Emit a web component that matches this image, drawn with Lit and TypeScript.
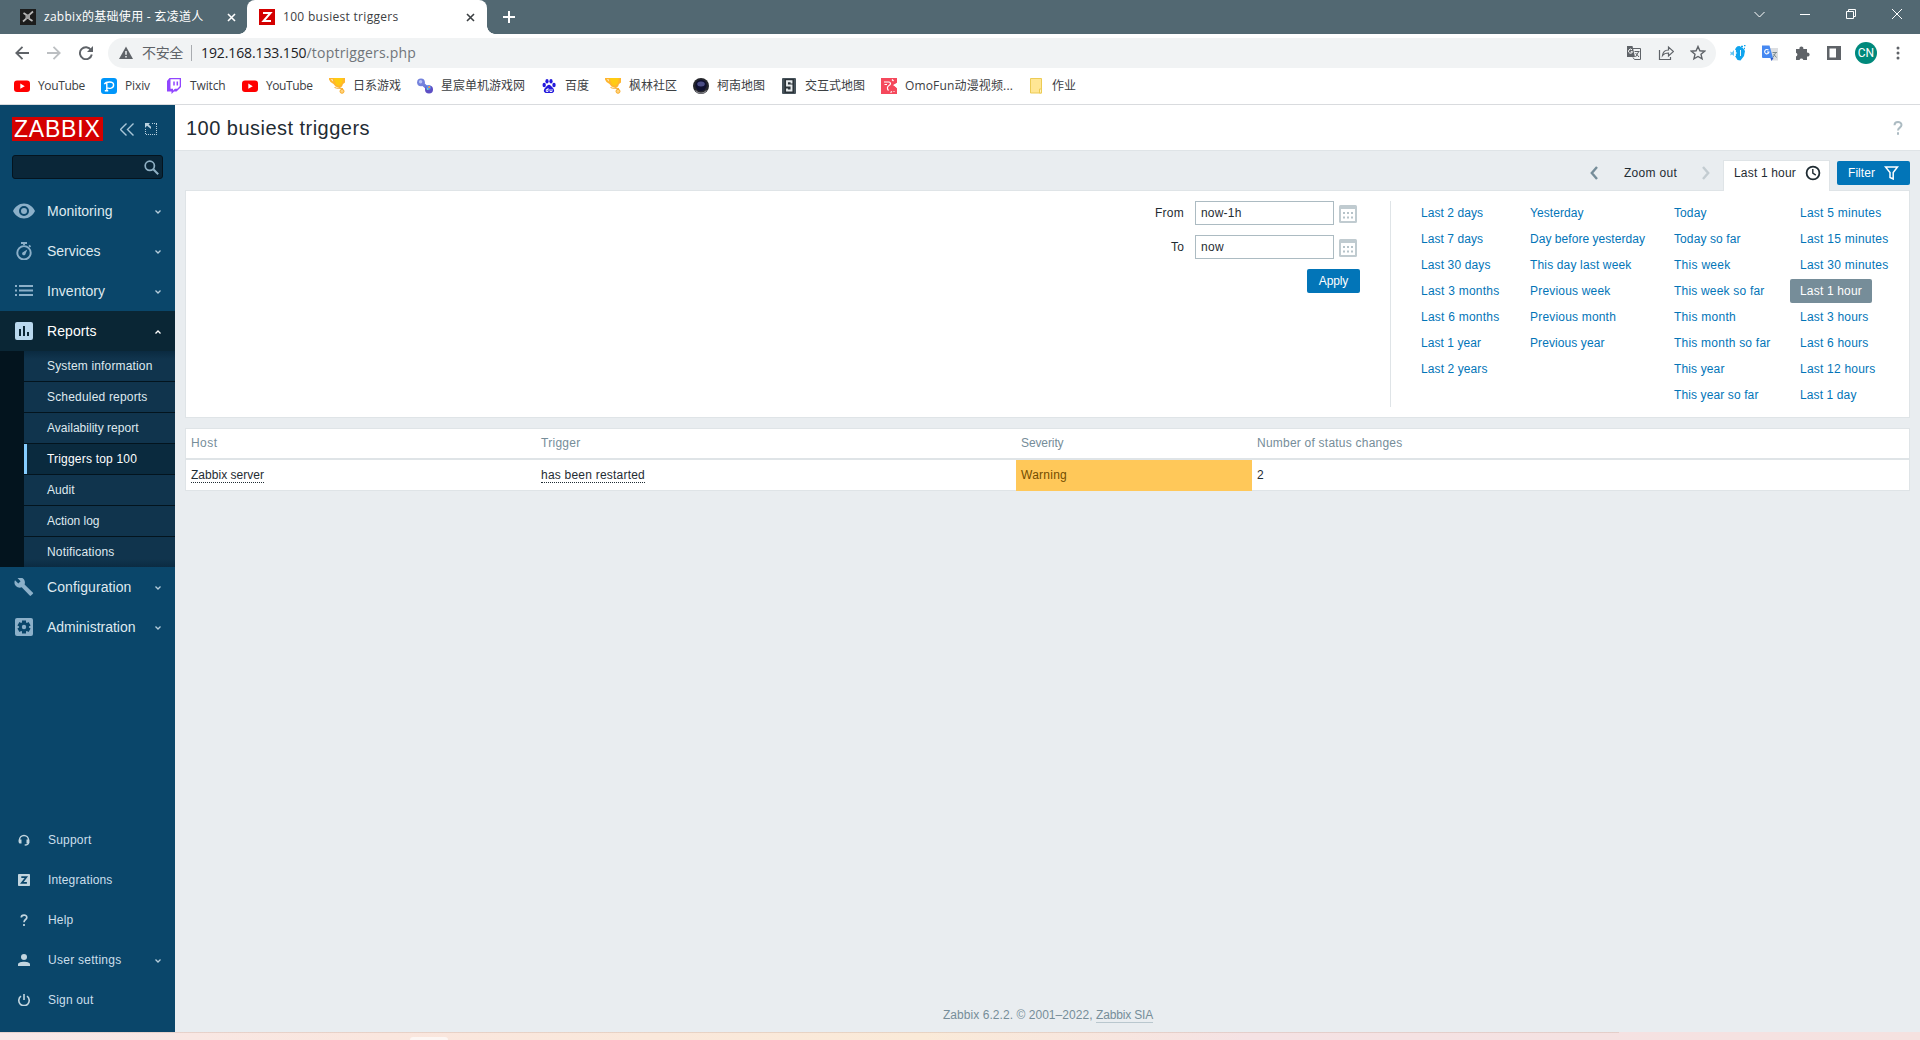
import { LitElement, html, svg, css } from "lit";
import { customElement } from "lit/decorators.js";
import { classMap } from "lit/directives/class-map.js";

const UI = '"Liberation Sans", Arial, sans-serif';
const CHROME = '"Open Sans", "Noto Sans CJK SC", sans-serif';

const pen = document.createElement("canvas").getContext("2d")!;

/** A run of text whose tracking is computed so that it occupies `width` pixels. */
const run = (text: string, width: number, size = 12, family = UI) => {
  pen.font = `${size}px ${family}`;
  const natural = pen.measureText(text).width;
  const gap = (width - natural) / text.length;
  return html`<span style="letter-spacing:${gap.toFixed(3)}px">${text}</span>`;
};

const icon = (w: number, h: number, body: unknown, cls = "") =>
  html`<svg class=${cls} width=${w} height=${h} viewBox="0 0 ${w} ${h}" fill="none">${body}</svg>`;

const cross = (s: number, sw: number) =>
  icon(s, s, svg`<path d="M1 1 L${s - 1} ${s - 1} M${s - 1} 1 L1 ${s - 1}" stroke="currentColor" stroke-width=${sw}/>`);

/* ---------- bookmark icons ---------- */
const youtube = svg`<rect x="0" y="2.5" width="16" height="11.5" rx="3" fill="#f00"/><path d="M6.3 5.6v5.2L10.8 8.2z" fill="#fff"/>`;
const pixiv = svg`<rect width="16" height="16" rx="3" fill="#0096fa"/><path d="M5.8 13V4.500M3.300 6.200C5 3.500 12.600 2.900 12.600 6.900c0 3.700-4.300 3.800-6.600 3M3.800 12.800h3.400" stroke="#fff" stroke-width="1.400"/>`;
const twitch = svg`<path d="M3.5 0H15v9l-4.5 4.5H8L5.5 16v-2.500H1V3z" fill="#9146ff"/><path d="M4.5 1.3H13.700V8.3L11.300 10.700H9L7 12.500V10.700H4.500z" fill="#fff"/><path d="M8 3.600v3.800M11.300 3.600v3.800" stroke="#9146ff" stroke-width="1.500"/>`;
const trophy = svg`<path d="M0 0h16v4.500l-2 1.500-1 2.500-2.500 1.500-4-1.500L4.500 6 1.500 4 0 1.500z" fill="#ffb52e"/><path d="M4.500 0h9.500l-1 5-3 3-3-1.500z" fill="#ffcb12"/><path d="M1.800 1.300h1.800l.6 2.400z" fill="#fff3d0"/><path d="M5.500 9.500c3 1.500 6 .2 8.500 1.200M11 9.500l2.500 2.500" stroke="#f8ac2a" stroke-width="1"/><circle cx="13" cy="13.300" r="2" fill="#ffd27a" stroke="#f8ac2a" stroke-width="1"/>`;
const gamepad = svg`<path d="M4 4.500L12 11.500" stroke="#6f7fd8" stroke-width="3.500"/><circle cx="4" cy="4.300" r="3.900" fill="#7482dc"/><circle cx="12" cy="11.500" r="4" fill="#5d4fc4"/><circle cx="11.500" cy="9.500" r="2.400" fill="#5b8def"/><circle cx="3.600" cy="3.800" r="1.700" fill="#b9c4f5"/><circle cx="12.200" cy="9" r="1" fill="#ff9d3b"/><circle cx="10.600" cy="11" r=".9" fill="#65e0c5"/>`;
const baidu = svg`<g fill="#2319dc"><ellipse cx="3.200" cy="7" rx="1.700" ry="2.200"/><ellipse cx="6" cy="3.200" rx="1.600" ry="2.200"/><ellipse cx="10" cy="3.200" rx="1.600" ry="2.200"/><ellipse cx="13" cy="7" rx="1.700" ry="2.200"/><path d="M8 6.800c1.500 0 2.200 1.500 3.500 2.700 3 3 1.500 5.500-1 5.500H5.500C3 15 1.500 12.500 4.500 9.500 5.800 8.300 6.500 6.800 8 6.800z"/></g><path d="M7 10v3.500H5.300v-2H7M9 11v2.500h2V11" stroke="#fff" stroke-width=".9"/>`;
const lens = svg`<circle cx="8" cy="8" r="8" fill="#25262c"/><circle cx="8" cy="7.300" r="5.600" fill="#0f1030"/><ellipse cx="8" cy="6" rx="3.800" ry="2.500" fill="#4b4d86"/><path d="M2.500 12.500a7 7 0 0 0 11 0" stroke="#8c8c92" stroke-width="1.200"/>`;
const slab = svg`<rect x="1" width="14" height="16" rx="1" fill="#46525a"/><rect x="3.500" y="1" width="9.500" height="14" fill="#2a3238"/><path d="M10.500 5.500V3.200H6v4.300h4.500v5H6v-2" stroke="#e8ecee" stroke-width="1.900"/>`;
const omo = svg`<path d="M0 0h16v6l-4 1 4 2.500V16H0z" fill="#f5485c"/><path d="M3 4h5c2 .5 2 2.500 0 3.500S6 11 7.500 12.500M3.500 6.500h2.500" stroke="#fff" stroke-width="1.200"/><path d="M11 1.500l1.500 1.500M13.500 7l2.500-1.500v4zM9.500 14.500l1.500-1M12.500 13.500h1" stroke="#fff" fill="#fff" stroke-width="1.200"/>`;
const folder = svg`<path d="M2.500.5h11v14.500h-11z" fill="#ffe694" stroke="#eccb54"/><path d="M11.500 11h2v4h-2z" fill="#fff3c0" stroke="#eccb54"/>`;

const BOOKMARKS: [unknown, string, number][] = [
  [youtube, "YouTube", 47], [pixiv, "Pixiv", 25], [twitch, "Twitch", 35.5], [youtube, "YouTube", 46.5],
  [trophy, "日系游戏", 48], [gamepad, "星宸单机游戏网", 84], [baidu, "百度", 24], [trophy, "枫林社区", 48],
  [lens, "柯南地图", 48], [slab, "交互式地图", 60], [omo, "OmoFun动漫视频...", 108], [folder, "作业", 24],
];

/* ---------- sidebar icons ---------- */
const eye = svg`<path fill-rule="evenodd" d="M11 1.500C6 1.500 2 4.700 0 9c2 4.300 6 7.500 11 7.500S20 13.300 22 9C20 4.700 16 1.500 11 1.500zM11 4a5 5 0 1 1 0 10 5 5 0 0 1 0-10zM11 6a3 3 0 1 0 0 6 3 3 0 0 0 0-6z" fill="currentColor"/>`;
const watch = svg`<circle cx="11" cy="10.800" r="6.700" stroke="currentColor" stroke-width="1.900"/><path d="M8 1h6M16 3.300l1.500 1.500M11 1v2" stroke="currentColor" stroke-width="1.800"/><path d="M14.300 7.500l-1.800 4.400a1.700 1.700 0 1 1-2.600-1.700z" fill="currentColor"/>`;
const list = svg`<path d="M2 4h2M2 8.500h2M2 13h2M6 4h14M6 8.500h14M6 13h14" stroke="currentColor" stroke-width="2"/>`;
const chart = svg`<path fill-rule="evenodd" d="M4 0h14a2 2 0 0 1 2 2v14a2 2 0 0 1-2 2H4a2 2 0 0 1-2-2V2a2 2 0 0 1 2-2zM6 7v7h2V7zM10 4v10h2V4zM14 10v4h2v-4z" fill="currentColor"/>`;
const wrench = svg`<path d="M19.700 14.600l-8.100-8.100c.7-2 .3-4.200-1.300-5.700C8.600-.7 6.300-1 4.400-.1L7.600 3.200 5.300 5.500 2 2.300C1 4.200 1.400 6.500 3 8.100c1.500 1.500 3.700 2 5.700 1.200l8 8.300c.4.400 1 .4 1.300 0l1.900-1.800c.4-.4.300-1-.2-1.200z" fill="currentColor"/>`;
const gear = svg`<rect x="2" y="0" width="18" height="18" rx="2" fill="currentColor"/><path d="M11 2.500v13M5.400 5.700l11.200 6.600M5.400 12.300l11.200-6.600" stroke="#0a466a" stroke-width="4"/><circle cx="11" cy="9" r="5" fill="#0a466a"/><circle cx="11" cy="9" r="2.200" fill="currentColor"/>`;

const headset = svg`<path d="M1.500 8V6a4.500 4.500 0 0 1 9 0v2M10.700 8c0 2.500-1.500 3-4 3" stroke="currentColor" stroke-width="1.400"/><path d="M.7 5.500h2.800v4H1.500L.7 8.500zM11.300 5.500H8.500v4h2l.8-1z" fill="currentColor"/>`;
const zsquare = svg`<rect width="12" height="12" rx=".8" fill="currentColor"/><path d="M3.300 3.200h5L3.800 8.900h5.100" stroke="#0a466a" stroke-width="1.700"/>`;
const question = svg`<path d="M3.300 3.500C3.300.5 8.800.2 8.800 3.400 8.800 5.600 6 5.500 6 8.300M6 10v2" stroke="currentColor" stroke-width="1.700"/>`;
const person = svg`<circle cx="6" cy="3" r="3" fill="currentColor"/><path d="M0 12v-1.500C0 8.500 3 7.700 6 7.700s6 .8 6 2.800V12z" fill="currentColor"/>`;
const power = svg`<path d="M3 2.200a5.200 5.200 0 1 0 6 0M6 0v6" stroke="currentColor" stroke-width="1.600"/>`;

const MAIN: [unknown, string, number, boolean][] = [
  [eye, "Monitoring", 65.5, false], [watch, "Services", 53.5, false], [list, "Inventory", 58, false],
  [chart, "Reports", 49.5, true], [wrench, "Configuration", 84.5, false], [gear, "Administration", 88.5, false],
];
const REPORTS: [string, number][] = [
  ["System information", 105.5], ["Scheduled reports", 100.5], ["Availability report", 91.5], ["Triggers top 100", 90],
  ["Audit", 27.5], ["Action log", 52.5], ["Notifications", 67.5],
];
const USER: [unknown, string, number, boolean][] = [
  [headset, "Support", 43.5, false], [zsquare, "Integrations", 64.5, false], [question, "Help", 25.5, false],
  [person, "User settings", 73.5, true], [power, "Sign out", 45.500, false],
];

const RANGES: [string, number][][] = [
  [["Last 2 days", 62], ["Last 7 days", 62], ["Last 30 days", 69.5], ["Last 3 months", 78.5], ["Last 6 months", 78.5], ["Last 1 year", 60], ["Last 2 years", 66.5]],
  [["Yesterday", 53.5], ["Day before yesterday", 115], ["This day last week", 101.5], ["Previous week", 80.5], ["Previous month", 86], ["Previous year", 74.5]],
  [["Today", 32.5], ["Today so far", 66.5], ["This week", 56.5], ["This week so far", 90.5], ["This month", 62], ["This month so far", 96.5], ["This year", 50.5], ["This year so far", 84.5]],
  [["Last 5 minutes", 81.5], ["Last 15 minutes", 88.5], ["Last 30 minutes", 88.500], ["Last 1 hour", 62], ["Last 3 hours", 68.5], ["Last 6 hours", 68.5], ["Last 12 hours", 75.5], ["Last 1 day", 56.5]],
];

@customElement("browser-chrome")
class BrowserChrome extends LitElement {
  static styles = css`
    :host { display: block; font: 12px/16px "Open Sans", "Noto Sans CJK SC", sans-serif; color: #3c4043; white-space: nowrap; }
    svg { display: block; flex: none; }
    .tabs { height: 34px; background: #526872; display: flex; }
    .tab { box-sizing: border-box; height: 34px; display: flex; align-items: center; }
    .tab svg { margin-right: 8px; }
    .tab .label { flex: 1; }
    .idle { width: 247px; padding-left: 20px; color: #fff; }
    .idle .close { padding-right: 11px; }
    .tab .close svg { margin: 0; }
    .active { position: relative; width: 240px; padding: 0 12px; background: #fff; border-radius: 8px 8px 0 0; color: #3c4043; }
    .active::before, .active::after { content: ""; position: absolute; bottom: 0; width: 8px; height: 8px; }
    .active::before { left: -8px; background: radial-gradient(circle at 0 0, transparent 7.5px, #fff 8px); }
    .active::after { right: -8px; background: radial-gradient(circle at 100% 0, transparent 7.5px, #fff 8px); }
    .plus { padding: 11px 0 0 16px; color: #fff; }
    .window { margin-left: auto; display: flex; height: 28px; color: #fff; }
    .window span { width: 46px; display: grid; place-items: center; }
    .bar { height: 38px; display: flex; align-items: center; background: #fff; }
    .nav { display: flex; gap: 18px; padding: 0 15px; width: 78px; }
    .pill { width: 1608px; height: 30px; border-radius: 15px; background: #f1f3f4; display: flex; align-items: center; box-sizing: border-box; padding: 0 10px 0 11px; font-size: 14px; }
    .insecure { margin-left: 9px; color: #5f6368; }
    .rule { width: 1px; height: 16px; background: #a9acb0; margin: 0 9px 0 8px; }
    .host { color: #202124; }
    .path { color: #70757a; flex: 1; }
    .pill .tools { display: flex; gap: 16px; }
    .ext { display: flex; gap: 10px; margin-left: 11px; }
    .ext > * { width: 22px; height: 22px; display: grid; place-items: center; }
    .avatar { border-radius: 50%; background: #00897b; color: #fff; font: 12px/22px Roboto, sans-serif; }
    .marks { height: 32px; padding-left: 14px; background: #fff; border-bottom: 1px solid #d9dbde; display: grid; align-items: center;
      grid-template-columns: 87px 65px 76px 87px 88px 124px 64px 88px 88px 100px 147px auto; }
    .mark { display: flex; align-items: center; gap: 8px; margin-top: -4px; }
  `;
  render() {
    const c = (s: string, w: number, size = 12) => run(s, w, size, CHROME);
    return html`
      <div class="tabs">
        <div class="tab idle">
          ${icon(16, 16, svg`<rect width="16" height="16" fill="#1c1c1c"/><path d="M3.500 4l3 2 3 4 3 2M13 2.500L9 6l-3 4-3 2.500" stroke="#b9b9b9" stroke-width="1.700"/><path d="M5.500 5.500h4.500v4.500H5.500z" fill="#9d9d9d"/>`)}
          <span class="label">${c("zabbix的基础使用 - 玄凌道人", 159.5)}</span><span class="close">${cross(9, 1.6)}</span>
        </div>
        <div class="tab active">
          ${icon(16, 16, svg`<rect width="16" height="16" fill="#d40000"/><path d="M4 4h7.500L4.500 12H12" stroke="#fff" stroke-width="2"/>`)}
          <span class="label">${c("100 busiest triggers", 115.5)}</span><span class="close">${cross(9, 1.6)}</span>
        </div>
        <div class="plus">${icon(12, 12, svg`<path d="M6 0v12M0 6h12" stroke="currentColor" stroke-width="2"/>`)}</div>
        <div class="window">
          <span>${icon(11, 7, svg`<path d="M.5 1l5 5 5-5" stroke="currentColor"/>`)}</span>
          <span>${icon(10, 1, svg`<path d="M0 .5h10" stroke="currentColor"/>`)}</span>
          <span>${icon(10, 10, svg`<path d="M.5 2.500h7v7h-7zM2.500 2V.5h7v7H8" stroke="currentColor"/>`)}</span>
          <span>${icon(10, 10, svg`<path d="M0 0l10 10M10 0L0 10" stroke="currentColor"/>`)}</span>
        </div>
      </div>
      <div class="bar">
        <div class="nav">
          ${icon(14, 14, svg`<path d="M14 7H1.500M7.500 .8L1.300 7l6.200 6.200" stroke="#5f6368" stroke-width="1.800"/>`)}
          ${icon(14, 14, svg`<path d="M0 7h12.500M6.500 .8L12.700 7l-6.200 6.200" stroke="#bcbfc2" stroke-width="1.800"/>`)}
          ${icon(14, 14, svg`<path d="M12 4A6 6 0 1 0 12.800 8.500" stroke="#5f6368" stroke-width="1.900"/><path d="M14 0v6H8z" fill="#5f6368"/>`)}
        </div>
        <div class="pill">
          ${icon(14, 14, svg`<path d="M7 .5L14 13H0z" fill="#5f6368"/><path d="M7 5v3.800M7 9.900v1.500" stroke="#f1f3f4" stroke-width="1.500"/>`)}
          <span class="insecure">${c("不安全", 41, 14)}</span><span class="rule"></span>
          <span class="host">${c("192.168.133.150", 105.5, 14)}</span><span class="path">${c("/toptriggers.php", 109.5, 14)}</span>
          <span class="tools">
            ${icon(16, 16, svg`<path d="M6.500 3.500H14.500V14.500H8.500" stroke="#5f6368"/><path d="M1 1h5.500l2.500 11H1z" fill="#5f6368"/><path d="M6 4.800A2 2 0 1 0 6.500 6.700H4.800" stroke="#fff" stroke-width="1"/><path d="M8.500 6.500h5M12.500 7l-3 5M9.500 8l3.500 4M7 12.500l1.500 2" stroke="#5f6368"/>`)}
            ${icon(16, 16, svg`<path d="M1.500 5v9.500h11V12" stroke="#5f6368" stroke-width="1.200"/><path d="M4.500 10.500C5 6.500 8 5 10.500 5V2l5 4.500-5 4.500V8C8 8 6 8.500 4.500 10.500z" stroke="#5f6368" stroke-width="1.200"/>`)}
            ${icon(16, 16, svg`<path d="M8 1.500l1.900 4.300 4.700.4-3.600 3.100 1.100 4.600L8 11.500l-4.100 2.400L5 9.300 1.400 6.200l4.700-.4z" stroke="#5f6368" stroke-width="1.400"/>`)}
          </span>
        </div>
        <div class="ext">
          <span>${icon(16, 16, svg`<path d="M5 6c0-3 1.500-5 4.500-5l1.500 1 2 1 2 3-1 5-3.500 4.500L7.500 15 5 11z" fill="#0fa4ee"/><path d="M0 6.500l2 1 2-2.500v6L2 9.500l-2 1 .8-2z" fill="#64c4f2"/><path d="M5.500 5v6M10.500 5v6M4 8h3" stroke="#fff" stroke-width=".9"/><path d="M11 1.500h2M14 .5h1.500M14 3.500h1" stroke="#0fa4ee" stroke-width="1.400"/>`)}</span>
          <span>${icon(16, 16, svg`<path d="M6 3h10v12.500H9z" fill="#dcdee1"/><path d="M0 .5h7.500L11 13H1a1 1 0 0 1-1-1z" fill="#4688f1"/><path d="M8.500 13h3l-2 3z" fill="#2a56c6"/><path d="M6.500 5.200A2.200 2.200 0 1 0 7 7H5" stroke="#fff" stroke-width="1.100"/><path d="M10.500 7.500h4.500M13.500 8l-2.500 4.500M11.500 9l3 3.500" stroke="#7b8a90"/>`)}</span>
          <span>${icon(16, 16, svg`<path d="M2 4h3.500a2 2 0 1 1 3.800 0H13v3.700a2 2 0 1 1 0 3.800V15H9.300a2 2 0 0 0-3.800 0H2v-3.500a2 2 0 0 0 0-3.800z" fill="#5f6368"/>`)}</span>
          <span>${icon(14, 14, svg`<path fill-rule="evenodd" d="M0 0h14v14H0zM2.500 2.500v9H9v-9z" fill="#5f6368"/>`)}</span>
          <span class="avatar">CN</span>
          <span>${icon(4, 14, svg`<g fill="#5f6368"><circle cx="2" cy="2" r="1.500"/><circle cx="2" cy="7" r="1.500"/><circle cx="2" cy="12" r="1.500"/></g>`)}</span>
        </div>
      </div>
      <div class="marks">
        ${BOOKMARKS.map(([art, name, w]) => html`<span class="mark">${icon(16, 16, art)}${c(name, w)}</span>`)}
      </div>`;
  }
}

@customElement("side-bar")
class SideBar extends LitElement {
  static styles = css`
    :host { display: flex; flex-direction: column; width: 175px; height: 927px; background: #0a466a; font: 12px/16px "Liberation Sans", Arial, sans-serif; color: #dfe9ef; white-space: nowrap; }
    svg { display: block; flex: none; }
    .brand { display: flex; align-items: center; height: 24px; padding: 12px 0 0 12px; }
    .logo { box-sizing: border-box; width: 91px; height: 24px; padding-left: 2px; background: #d40000; color: #fff; font-size: 23px; line-height: 25px; margin-right: 17px; }
    .collapse { margin-right: 11px; color: #a9c6d8; }
    .compact { color: #b9d1df; }
    .search { box-sizing: border-box; height: 24px; width: 151px; margin: 14px 0 12px 12px; border: 1px solid #04141f; border-radius: 3px; background: #0a2638; display: flex; justify-content: flex-end; align-items: center; padding-right: 3px; color: #8fb0c4; }
    .item { height: 40px; display: flex; align-items: center; padding: 0 14px 0 13px; font-size: 14px; }
    .item > svg:first-child { color: #8cb0c9; margin-right: 12px; }
    .item .label { flex: 1; }
    .item .chev { color: #b5cddb; margin-top: 2px; }
    .open { background: #0a2635; color: #fff; }
    .open > svg:first-child { color: #b9d8ee; }
    .sub { display: flex; flex-direction: column; gap: 1px; padding-left: 24px; background: #03141e; }
    .entry { height: 30px; line-height: 31px; padding-left: 23px; background: #10344d; color: #dfe9ef; }
    .entry:first-child { background: linear-gradient(#0a2a40, #10344d 8px); }
    .entry:last-child { background: linear-gradient(#10344d 22px, #0b2b42); }
    .current { box-sizing: border-box; background: #0a2a3e; border-left: 3px solid #85cdff; padding-left: 20px; color: #fff; }
    .user { margin-top: auto; padding-bottom: 12px; }
    .user .item { font-size: 12px; padding-left: 18px; color: #ccdfea; }
    .user .item > svg:first-child { margin-right: 18px; color: #c2d5df; }
  `;
  render() {
    const down = icon(6, 4, svg`<path d="M.5 .5L3 3 5.500 .5" stroke="currentColor" stroke-width="1.300"/>`, "chev");
    const up = icon(6, 4, svg`<path d="M.5 3.500L3 1l2.500 2.500" stroke="#fff" stroke-width="1.300"/>`, "chev");
    return html`
      <div class="brand">
        <div class="logo">${run("ZABBIX", 86.5, 23)}</div>
        ${icon(14, 13, svg`<path d="M6.500 .5l-6 6 6 6M13.500 .5l-6 6 6 6" stroke="currentColor" stroke-width="1.400"/>`, "collapse")}
        ${icon(12, 12, svg`<path d="M7 .5h5M11.500 1v11M.5 6v6M1 11.500h10" stroke="currentColor" stroke-dasharray="1 1"/><path d="M0 0h5L3.600 1.400 6 3.800V6L2 2.800 0 5z" fill="currentColor"/>`, "compact")}
      </div>
      <div class="search">${icon(15, 15, svg`<circle cx="5.800" cy="5.800" r="4.600" stroke="currentColor" stroke-width="1.700"/><path d="M9.300 9.300l4.900 4.900" stroke="currentColor" stroke-width="2"/>`)}</div>
      ${MAIN.map(([art, name, w, open]) => html`
        <div class=${classMap({ item: true, open })}>${icon(22, 18, art)}<span class="label">${run(name, w, 14)}</span>${open ? up : down}</div>
        ${open ? html`<div class="sub">${REPORTS.map(([s, sw]) => html`<div class=${classMap({ entry: true, current: s === "Triggers top 100" })}>${run(s, sw)}</div>`)}</div>` : ""}`)}
      <div class="user">
        ${USER.map(([art, name, w, more]) => html`<div class="item">${icon(12, 12, art)}<span class="label">${run(name, w)}</span>${more ? down : ""}</div>`)}
      </div>`;
  }
}

@customElement("trigger-report")
class TriggerReport extends LitElement {
  static styles = css`
    :host { display: flex; flex-direction: column; height: 927px; background: #e9edf0; font: 12px/16px "Liberation Sans", Arial, sans-serif; color: #1f2c33; white-space: nowrap; }
    svg { display: block; flex: none; }
    .head { height: 45px; background: #fff; border-bottom: 1px solid #dfe4e7; display: flex; justify-content: space-between; align-items: center; padding: 0 17px 0 11px; font-size: 20px; line-height: 24px; }
    .help { color: #acbbc2; }
    .controls { display: flex; justify-content: flex-end; height: 31px; padding: 9px 10px 0 0; position: relative; margin-bottom: -1px; }
    .zoom { display: flex; align-items: center; height: 26px; gap: 25px; margin-right: 13px; }
    .zoom span { width: 53px; }
    .prev { margin-right: 1px; }
    .tab { box-sizing: border-box; width: 107px; height: 31px; background: #fff; border: 1px solid #dfe4e7; border-bottom: 0; display: flex; padding: 4px 8px 0 10px; justify-content: space-between; margin-right: 7px; }
    .filter { box-sizing: border-box; width: 73px; height: 24px; margin-top: 1px; padding: 0 11px; border-radius: 2px; background: #0275b8; color: #fff; display: flex; align-items: center; justify-content: space-between; }
    .panel { box-sizing: border-box; height: 228px; margin: 0 10px; background: #fff; border: 1px solid #dfe4e7; padding: 10px 0 0; display: flex; justify-content: flex-end; }
    .form { display: grid; grid-template-columns: auto 139px 23px; row-gap: 10px; align-content: start; align-items: start; margin-right: 33px; }
    .name { text-align: right; padding-right: 11px; height: 24px; line-height: 25px; }
    .field { box-sizing: border-box; height: 24px; line-height: 23px; border: 1px solid #acbbc2; padding-left: 5px; background: #fff; }
    .cal { margin: 4px 0 0 5px; }
    .actions { grid-column: 1 / -1; display: flex; justify-content: flex-end; margin-right: -3px; }
    .apply { width: 53px; height: 24px; line-height: 25px; border-radius: 2px; text-align: center; background: #0275b8; color: #fff; }
    .ranges { box-sizing: border-box; height: 206px; border-left: 1px solid #dfe4e7; padding-left: 20px; display: grid; grid-template-columns: 109px 144px 126px 119px; align-items: start; }
    .col { display: flex; flex-direction: column; align-items: flex-start; gap: 2px; }
    .link { box-sizing: border-box; height: 24px; line-height: 24px; padding: 0 10px; border-radius: 2px; color: #0275b8; }
    .picked { background: #768d99; color: #fff; }
    .table { margin: 10px 10px 0; background: #fff; border: 1px solid #dfe4e7; }
    .row { display: grid; grid-template-columns: 350px 480px 236px 1fr; height: 30px; line-height: 31px; }
    .row > * { padding-left: 5px; }
    .th { color: #768d99; height: 29px; line-height: 28px; border-bottom: 2px solid #dfe4e7; }
    .dotted { display: inline-block; line-height: 14px; border-bottom: 1px dotted #1f2c33; }
    .warning { background: #ffc859; color: #734d00; }
    .footer { margin-top: auto; padding: 0 0 9px 1px; display: flex; align-items: baseline; justify-content: center; color: #768d99; }
    .sia { padding-top: 1px; line-height: 14px; border-bottom: 1px solid #b9c7ce; }
  `;
  render() {
    const cal = icon(18, 18, svg`<rect width="18" height="18" rx="1.500" fill="#c0cbd0"/><path d="M2 4h14v12H2z" fill="#fff"/><path d="M4 8h2M8 8h2M12 8h2M4 12.500h2M8 12.500h2M12 12.500h2" stroke="#b6c3c9" stroke-width="2"/>`, "cal");
    return html`
      <div class="head">${run("100 busiest triggers", 184, 20)}<span class="help">${icon(10, 14, svg`<path d="M1.500 4.300C1.500 0 8.500 0 8.500 4 8.500 6.700 5 6.500 5 9.500M5 11.300v2.400" stroke="currentColor" stroke-width="2"/>`)}</span></div>
      <div class="controls">
        <div class="zoom">
          ${icon(8, 14, svg`<path d="M7 1L1.800 7 7 13" stroke="#768d99" stroke-width="2.400"/>`, "prev")}
          <span>${run("Zoom out", 53)}</span>
          ${icon(8, 14, svg`<path d="M1 1l5.200 6L1 13" stroke="#c3ccd1" stroke-width="2.400"/>`)}
        </div>
        <div class="tab">${run("Last 1 hour", 62)}${icon(16, 16, svg`<circle cx="8" cy="8" r="6.400" stroke="#1f2c33" stroke-width="1.800"/><path d="M7.800 4v4.200l3 2" stroke="#1f2c33" stroke-width="1.400"/>`)}</div>
        <div class="filter">${run("Filter", 27)}${icon(15, 14, svg`<path d="M1.500 1h12L9.200 6.500V13L6 11.500v-5z" stroke="#fff" stroke-width="1.500"/>`)}</div>
      </div>
      <div class="panel">
        <div class="form">
          <span class="name">${run("From", 29)}</span><div class="field">${run("now-1h", 40.5)}</div>${cal}
          <span class="name">${run("To", 13)}</span><div class="field">${run("now", 23)}</div>${cal}
          <div class="actions"><div class="apply">${run("Apply", 29.5)}</div></div>
        </div>
        <div class="ranges">
          ${RANGES.map(col => html`<div class="col">${col.map(([s, w]) => html`<span class=${classMap({ link: true, picked: s === "Last 1 hour" })}>${run(s, w)}</span>`)}</div>`)}
        </div>
      </div>
      <div class="table">
        <div class="row th"><span>${run("Host", 26.5)}</span><span>${run("Trigger", 39.5)}</span><span>${run("Severity", 42.5)}</span><span>${run("Number of status changes", 145.5)}</span></div>
        <div class="row"><span><span class="dotted">${run("Zabbix server", 73)}</span></span><span><span class="dotted">${run("has been restarted", 104)}</span></span><span class="warning">${run("Warning", 46)}</span><span>${run("2", 7)}</span></div>
      </div>
      <div class="footer">${run("Zabbix 6.2.2. © 2001–2022,\u00a0", 153)}<span class="sia">${run("Zabbix SIA", 57)}</span></div>`;
  }
}

@customElement("app-root")
class AppRoot extends LitElement {
  static styles = css`
    :host { display: block; width: 1920px; height: 1040px; overflow: hidden; background: #fff; }
    .page { display: grid; grid-template-columns: 175px 1fr; }
    .desk { height: 8px; background: linear-gradient(90deg, rgba(190, 160, 145, 0.3) 1619px, transparent 1619px) 0 0 / 100% 1px no-repeat, linear-gradient(90deg, #f8e8e8, #fae6de 20%, #faead8 48%, #f5e2e4 65%, #f5e2e0); display: flex; padding-left: 410px; align-items: flex-end; box-sizing: border-box; }
    .desk span { width: 38px; height: 3px; border-radius: 4px 4px 0 0; background: #fdf6f3; }
  `;
  render() {
    return html`<browser-chrome></browser-chrome>
      <div class="page"><side-bar></side-bar><trigger-report></trigger-report></div>
      <div class="desk"><span></span></div>`;
  }
}
